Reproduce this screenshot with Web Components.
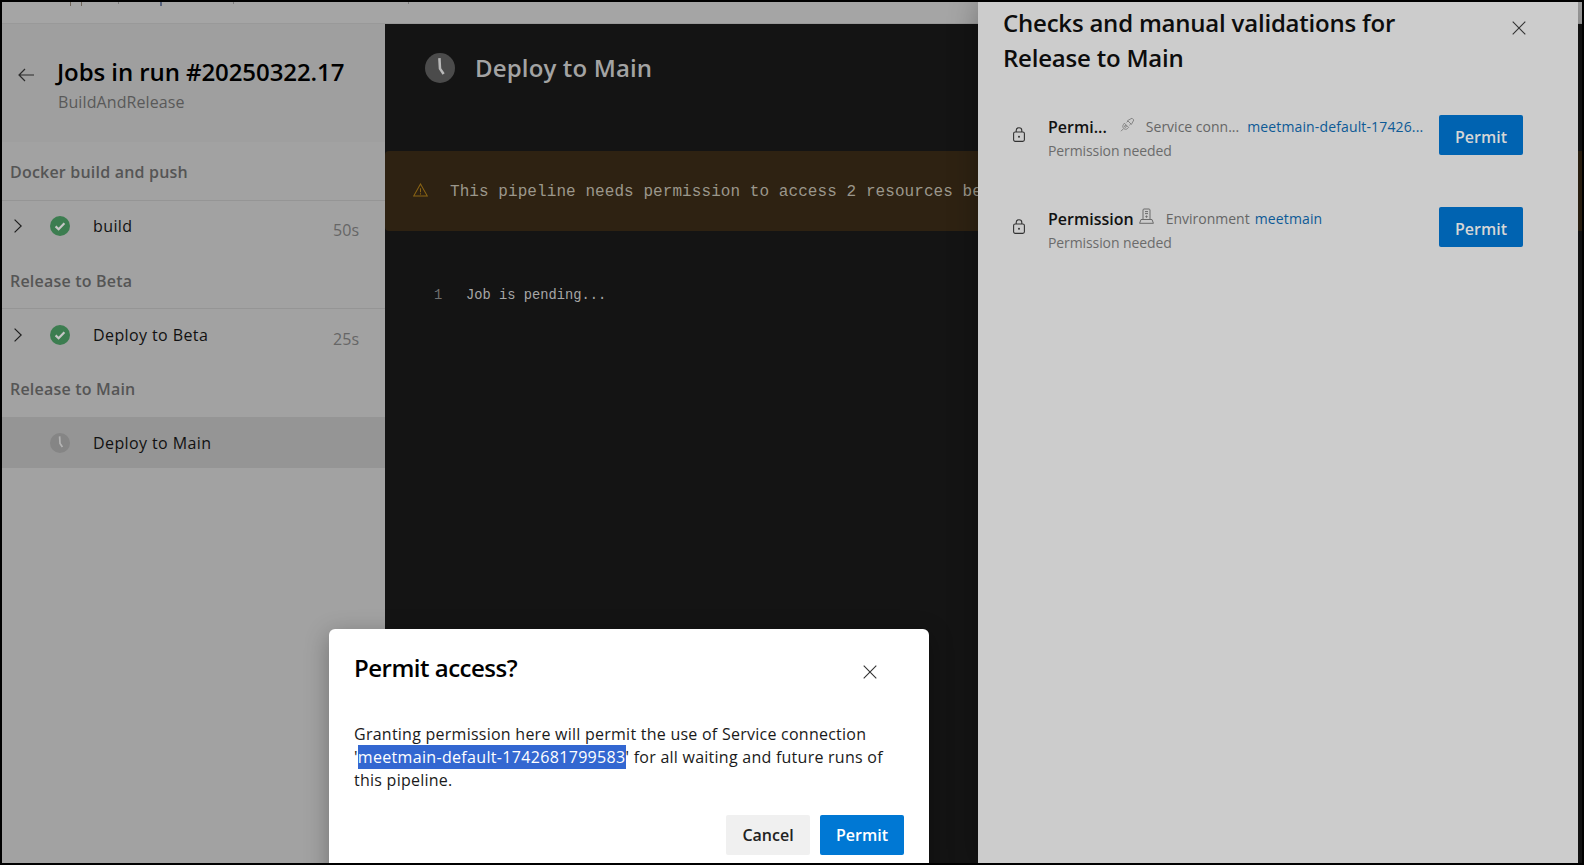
<!doctype html>
<html lang="en">
<head>
<meta charset="utf-8">
<title>Jobs in run</title>
<style>
  html, body { margin: 0; height: 100%; background: #000; overflow: hidden; }
  body { font-family: 'Open Sans', 'Noto Sans', sans-serif; }
</style>
</head>
<body>
<pipeline-page>
  <top-bar></top-bar>
  <jobs-sidebar heading="Jobs in run #20250322.17" sub="BuildAndRelease">
    <job-section label="Docker build and push" height="59" style="padding-top:2px"></job-section>
    <job-row status="ok" time="50s" expandable height="53" lift="4">build</job-row>
    <job-section label="Release to Beta" height="55"></job-section>
    <job-row status="ok" time="25s" expandable height="53" lift="1">Deploy to Beta</job-row>
    <job-section label="Release to Main" height="55" plain style="padding-bottom:2px"></job-section>
    <job-row status="pending" selected height="51">Deploy to Main</job-row>
  </jobs-sidebar>
  <log-pane heading="Deploy to Main" warning="This pipeline needs permission to access 2 resources before this run can continue"></log-pane>

  <checks-panel slot="overlay" heading="Checks and manual validations for Release to Main">
    <check-row>
      <span slot="title" style="margin-right:13px">Permi...</span>
      <svg slot="icon" style="margin-top:-4px" width="15" height="15" viewBox="0 0 15 15" fill="none" stroke="#727272" stroke-width=".8">
        <path d="M4.4 6.2 8.6 10.4 7.4 11.6C6.4 12.5 4.8 12.5 3.7 11.4 2.6 10.3 2.5 8.7 3.4 7.6Z"/>
        <circle cx="5.4" cy="9.4" r=".9"/>
        <path d="M3.6 11.6 1 14.2M6.6 5.4 8 4M9.4 8.2 10.8 6.8"/>
        <path d="M7.6 3.6 12 1.2l1.8 1.8-2.4 4.4Z"/>
      </svg>
      <span slot="kind" style="margin:0 8px 0 11px">Service conn...</span>
      <a slot="link">meetmain-default-17426...</a>
    </check-row>
    <check-row>
      <span slot="title" style="margin-right:5px">Permission</span>
      <svg slot="icon" style="margin-top:-5px" width="15" height="16" viewBox="0 0 15 16" fill="none" stroke="#6b6b6b" stroke-width="1">
        <path d="M4 11.5V2C4 1.4 4.4 1 5 1h5c.6 0 1 .4 1 1v9.5"/>
        <path d="M2 11.5h11l1.4 3.8H.6Z"/>
        <path d="M6 3.6h3M6 5.6h3"/>
        <circle cx="7.5" cy="8.6" r=".7" fill="#6b6b6b"/>
      </svg>
      <span slot="kind" style="margin:0 5px 0 12px">Environment</span>
      <a slot="link">meetmain</a>
    </check-row>
  </checks-panel>

  <permit-dialog slot="overlay" heading="Permit access?"></permit-dialog>
</pipeline-page>

<script>
const closeSvg = `<svg width="14" height="14" viewBox="0 0 14 14" fill="none" stroke="currentColor" stroke-width="1.1"><path d="M.7.7l12.6 12.6M13.3.7.7 13.3"/></svg>`;

function statusSvg(kind, size, disc, mark) {
  const inner = kind === 'ok'
    ? `<path d="M5.6 10.4l3 2.9 5.8-6" fill="none" stroke="${mark}" stroke-width="2.2"/>`
    : `<path d="M9.6 3.4 10 10.4l2.4 3.6" fill="none" stroke="${mark}" stroke-width="1.7"/>`;
  return `<svg width="${size}" height="${size}" viewBox="0 0 20 20"><circle cx="10" cy="10" r="10" fill="${disc}"/>${inner}</svg>`;
}

class PipelinePage extends HTMLElement {
  constructor() {
    super();
    this.attachShadow({ mode: 'open' }).innerHTML = `
      <style>
        :host { display: block; width: 1584px; height: 865px; padding: 2px; box-sizing: border-box; background: #000; }
        .frame { position: relative; width: 100%; height: 100%; overflow: hidden; display: flex; flex-direction: column; background: #141414; }
        .main { flex: 1; min-height: 0; display: flex; }
      </style>
      <div class="frame">
        <slot name="bar"></slot>
        <div class="main"><slot></slot></div>
        <slot name="overlay"></slot>
      </div>`;
  }
  connectedCallback() {
    const bar = this.querySelector('top-bar');
    if (bar) bar.slot = 'bar';
  }
}

class TopBar extends HTMLElement {
  constructor() {
    super();
    // only the descenders of the cut-off breadcrumb are left on screen
    this.attachShadow({ mode: 'open' }).innerHTML = `
      <style>
        :host { display: block; height: 21px; background: #a5a5a5; border-bottom: 1px solid #999; box-sizing: content-box; }
        .crumbs { display: flex; align-items: flex-start; padding-left: 68px; }
        i { display: block; width: 1px; height: 4px; background: #6d6459; }
        .b { background: #56627c; width: 2px; }
        .s { height: 2px; background: #7b7b7b; }
      </style>
      <div class="crumbs">
        <i></i><i style="margin-left:10px"></i>
        <i class="s" style="margin-left:36px"></i>
        <i class="b" style="margin-left:41px"></i>
        <i class="s" style="margin-left:71px"></i>
        <i class="s" style="margin-left:174px"></i>
      </div>`;
  }
}

class JobsSidebar extends HTMLElement {
  constructor() {
    super();
    this.attachShadow({ mode: 'open' }).innerHTML = `
      <style>
        :host { display: block; flex: 0 0 383px; background: #a2a2a2; }
        header { height: 118px; box-sizing: border-box; background: #9f9f9f; display: flex; padding: 32px 0 0 16px; gap: 23px; }
        svg { margin-top: 12px; flex: none; }
        h1 { margin: 0; font: 600 24px/32px 'Open Sans', sans-serif; letter-spacing: -.08px; color: #000; }
        p { margin: 2px 0 0 1px; font: 400 16px/24px 'Open Sans', sans-serif; letter-spacing: .1px; color: #595959; }
      </style>
      <header>
        <svg width="16" height="14" viewBox="0 0 16 14" fill="none" stroke="#2b2b2b" stroke-width="1.2"><path d="M16 7H1M7 1 1 7l6 6"/></svg>
        <div><h1></h1><p></p></div>
      </header>
      <slot></slot>`;
    this.shadowRoot.querySelector('h1').textContent = this.getAttribute('heading');
    this.shadowRoot.querySelector('p').textContent = this.getAttribute('sub');
  }
}

class JobSection extends HTMLElement {
  constructor() {
    super();
    this.attachShadow({ mode: 'open' }).innerHTML = `
      <style>
        :host { display: flex; align-items: center; box-sizing: border-box; padding-left: 8px; border-bottom: 1px solid #959595; font: 600 16px/24px 'Open Sans', sans-serif; letter-spacing: .2px; color: #555; }
        :host([plain]) { border-bottom: 0; }
      </style>
      <span></span>`;
    this.shadowRoot.querySelector('span').textContent = this.getAttribute('label');
    this.style.height = this.getAttribute('height') + 'px';
  }
}

class JobRow extends HTMLElement {
  constructor() {
    super();
    const ok = this.getAttribute('status') === 'ok';
    const icon = ok ? statusSvg('ok', 20, '#3c7d50', '#c6c6c6') : statusSvg('pending', 20, '#858585', '#b4b4b4');
    const time = this.getAttribute('time') || '';
    this.attachShadow({ mode: 'open' }).innerHTML = `
      <style>
        :host { display: flex; align-items: center; box-sizing: border-box; font: 400 16px/24px 'Open Sans', sans-serif; color: #111; }
        :host([selected]) { background: #959595; }
        .chev { width: 12px; margin-left: 12px; display: flex; }
        .ic { margin-left: 24px; display: flex; }
        .name { margin-left: 23px; flex: 1; letter-spacing: .4px; }
        .time { margin: 8px 26px 0 0; color: #666; }
      </style>
      <span class="chev">${this.hasAttribute('expandable') ? '<svg width="8" height="14" viewBox="0 0 8 14" fill="none" stroke="#1d1d1d" stroke-width="1.2"><path d="M.6.6 7.2 7 .6 13.4"/></svg>' : ''}</span>
      <span class="ic">${icon}</span>
      <span class="name"><slot></slot></span>
      <span class="time">${time}</span>`;
    this.style.height = this.getAttribute('height') + 'px';
    this.style.paddingBottom = (this.getAttribute('lift') || 0) + 'px';
  }
}

class LogPane extends HTMLElement {
  constructor() {
    super();
    this.attachShadow({ mode: 'open' }).innerHTML = `
      <style>
        :host { display: block; flex: 1; min-width: 0; overflow: hidden; background: #141414; }
        header { height: 127px; box-sizing: border-box; display: flex; align-items: flex-start; gap: 20px; padding: 29px 0 0 40px; }
        h2 { margin: 0; font: 600 24px/30px 'Open Sans', sans-serif; letter-spacing: .15px; color: #a3a3a3; }
        .warn { height: 80px; display: flex; align-items: center; gap: 16px; padding-left: 28px; background: #2e2212; border-radius: 4px 0 0 4px; white-space: nowrap; font: 400 16px/24px 'Liberation Mono', monospace; letter-spacing: .07px; color: #9b978b; }
        .warn svg { flex: none; margin-bottom: 2px; }
        .warn span { margin-left: 6px; margin-top: 1px; }
        .log { display: flex; padding: 56px 0 0 49px; font: 400 13.75px/18px 'Liberation Mono', monospace; color: #a6a6a6; }
        .log b { font-weight: 400; color: #6f6f6f; width: 32px; }
      </style>
      <header>${statusSvg('pending', 30, '#4b4b4b', '#b8b8b8')}<h2></h2></header>
      <div class="warn">
        <svg width="15" height="14" viewBox="0 0 16 15" fill="none" stroke="#8a6414" stroke-width="1.1"><path d="M8 1 15.3 14H.7Z"/><path d="M8 5.5v4.4M8 11v1.2"/></svg>
        <span></span>
      </div>
      <div class="log"><b>1</b><span>Job is pending...</span></div>`;
    this.shadowRoot.querySelector('h2').textContent = this.getAttribute('heading');
    this.shadowRoot.querySelector('.warn span').textContent = this.getAttribute('warning');
  }
}

class ChecksPanel extends HTMLElement {
  constructor() {
    super();
    this.attachShadow({ mode: 'open' }).innerHTML = `
      <style>
        :host { position: absolute; left: 976px; top: 0; width: 600px; bottom: 0; background: #ccc; box-shadow: 0 0 28px rgba(0,0,0,.3); }
        header { display: flex; justify-content: space-between; padding: 3px 52px 0 25px; height: 83px; box-sizing: border-box; }
        h2 { margin: 0; width: 440px; font: 600 24px/35px 'Open Sans', sans-serif; letter-spacing: -.21px; color: #0d0d0d; }
        .close { color: #333; margin-top: 16px; display: flex; height: 14px; }
      </style>
      <header><h2></h2><span class="close">${closeSvg}</span></header>
      <slot></slot>`;
    this.shadowRoot.querySelector('h2').textContent = this.getAttribute('heading');
  }
}

class CheckRow extends HTMLElement {
  constructor() {
    super();
    this.attachShadow({ mode: 'open' }).innerHTML = `
      <style>
        :host { display: flex; align-items: flex-start; height: 92px; box-sizing: border-box; padding: 30px 55px 0 35px; font-family: 'Open Sans', sans-serif; }
        .lock { flex: none; margin: 12px 23px 0 0; display: flex; }
        .text { flex: 1; min-width: 0; margin-top: -1px; }
        .top { display: flex; align-items: center; height: 25px; }
        ::slotted(span), ::slotted(a) { display: block; flex: none; white-space: nowrap; }
        ::slotted([slot="title"]) { font: 600 16px/24px 'Open Sans', sans-serif; color: #111; }
        ::slotted([slot="kind"]) { font: 400 14px/20px 'Open Sans', sans-serif; color: #666; }
        ::slotted([slot="link"]) { font: 400 14px/20px 'Open Sans', sans-serif; letter-spacing: .14px; color: #0d5a96; }
        ::slotted(svg) { flex: none; }
        .sub { font-size: 14px; line-height: 24px; color: #6b6b6b; letter-spacing: -.1px; }
        button { flex: none; width: 84px; height: 40px; margin-left: 16px; border: 0; border-radius: 2px; background: #0063b1; color: #d6d6d6; font: 600 16px/24px 'Open Sans', sans-serif; padding: 3px 0 0; }
      </style>
      <span class="lock"><svg width="12" height="15" viewBox="0 0 12 15" fill="none" stroke="#333" stroke-width="1.1"><path d="M3.2 5V3.4C3.2 1.9 4.4.8 6 .8s2.8 1.1 2.8 2.6V5"/><rect x=".6" y="5" width="10.8" height="9.4" rx="1.6"/><circle cx="6" cy="9.7" r="1" fill="#333" stroke="none"/></svg></span>
      <div class="text">
        <div class="top"><slot name="title"></slot><slot name="icon"></slot><slot name="kind"></slot><slot name="link"></slot></div>
        <div class="sub">Permission needed</div>
      </div>
      <button>Permit</button>`;
  }
}

class PermitDialog extends HTMLElement {
  constructor() {
    super();
    this.attachShadow({ mode: 'open' }).innerHTML = `
      <style>
        :host { position: absolute; left: 327px; top: 627px; width: 600px; height: 260px; box-sizing: border-box; padding: 22px 25px 0 25px; background: #fff; border-radius: 6px; box-shadow: 0 6px 24px rgba(0,0,0,.3); font-family: 'Open Sans', sans-serif; color: #111; }
        header { display: flex; justify-content: space-between; height: 34px; }
        h2 { margin: 0; font: 600 24px/34px 'Open Sans', sans-serif; letter-spacing: -.5px; color: #000; }
        .close { color: #333; margin: 14px 27px 0 0; display: flex; height: 14px; }
        p { margin: 38px 0 0; font-size: 16px; line-height: 23px; letter-spacing: .25px; color: #1a1a1a; }
        mark { background: #3367d1; color: #fff; letter-spacing: .33px; padding: 1px 0; }
        footer { display: flex; justify-content: flex-end; gap: 10px; margin-top: 23px; }
        button { width: 84px; height: 40px; border: 0; border-radius: 2px; padding: 0; font: 600 16px/24px 'Open Sans', sans-serif; }
        .cancel { background: #f0f0f0; color: #222; }
        .ok { background: #0078d4; color: #fff; }
      </style>
      <header><h2></h2><span class="close">${closeSvg}</span></header>
      <p>Granting permission here will permit the use of Service connection<br>'<mark>meetmain-default-1742681799583</mark>' for all waiting and future runs of<br>this pipeline.</p>
      <footer><button class="cancel">Cancel</button><button class="ok">Permit</button></footer>`;
    this.shadowRoot.querySelector('h2').textContent = this.getAttribute('heading');
  }
}

customElements.define('pipeline-page', PipelinePage);
customElements.define('top-bar', TopBar);
customElements.define('jobs-sidebar', JobsSidebar);
customElements.define('job-section', JobSection);
customElements.define('job-row', JobRow);
customElements.define('log-pane', LogPane);
customElements.define('checks-panel', ChecksPanel);
customElements.define('check-row', CheckRow);
customElements.define('permit-dialog', PermitDialog);
</script>
</body>
</html>
